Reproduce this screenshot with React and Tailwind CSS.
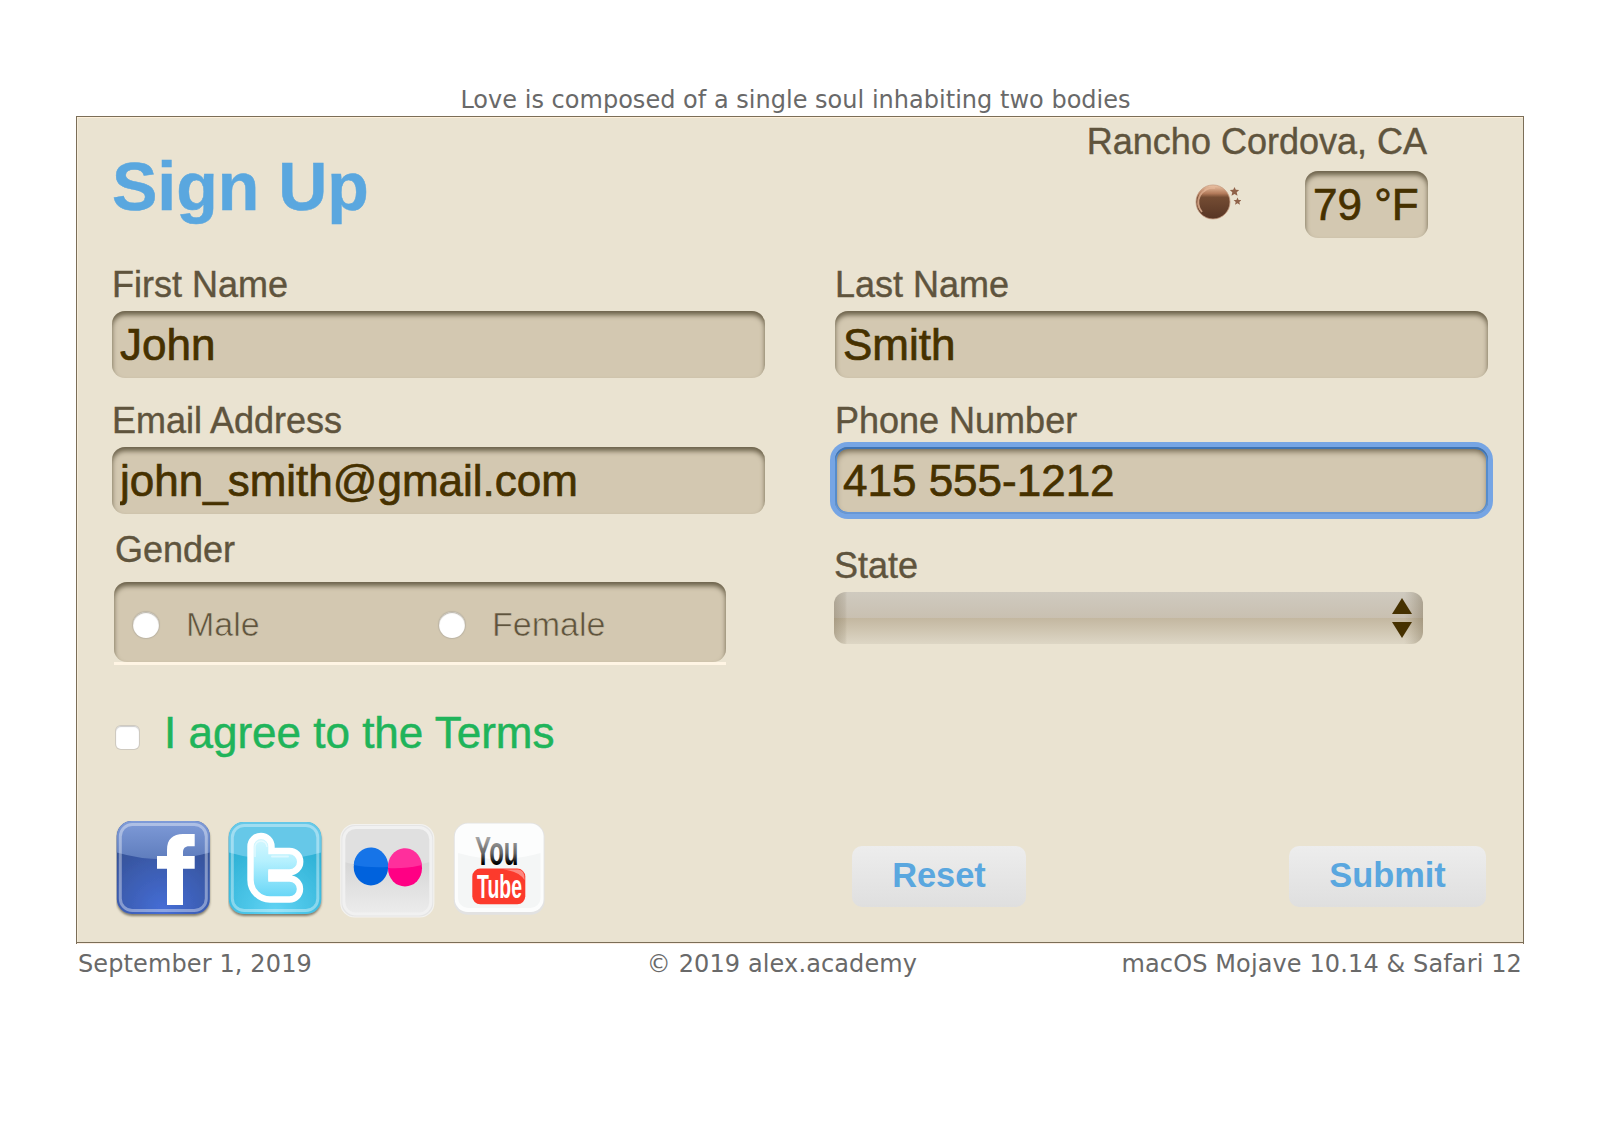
const inset = "shadow-[inset_0_4px_5px_#6b614a]";

function Field({ label, value, focused }) {
  return (
    <label className="block">
      <span className="mb-[5px] block h-[42px] text-[36px] leading-[42px] [-webkit-text-stroke:0.4px_#5f543d]">{label}</span>
      <input
        readOnly
        value={value}
        className={
          "block h-[67px] w-[653px] rounded-[13px] bg-[#d3c8b1] px-[8px] text-[44px] text-[#463100] outline-none [-webkit-text-stroke:0.7px_#463100] " +
          (focused
            ? "shadow-[0_0_0_5px_#76a5e4,inset_0_2px_0_#3e73b3,inset_0_-2px_0_#6697d6,inset_0_0_0_2px_#568ccb,inset_0_4px_6px_#665b45]"
            : inset)
        }
      />
    </label>
  );
}

function Radio({ label }) {
  return (
    <label className="flex w-[306px] items-center">
      <span className="h-[26px] w-[26px] shrink-0 rounded-full bg-white shadow-[inset_0_1px_1px_#b9b4aa,0_0_1px_1px_#bdb5a4]" />
      <span className="mb-[2px] ml-[27px] text-[34px] leading-[40px] [-webkit-text-stroke:0.6px_#d3c8b1]">{label}</span>
    </label>
  );
}

function Moon() {
  return (
    <svg width="46" height="38" viewBox="0 0 46 38">
      <defs>
        <linearGradient id="moon" x1="0" y1="0" x2="0" y2="1">
          <stop offset="0" stopColor="#efc7a8" />
          <stop offset="0.25" stopColor="#b27a5a" />
          <stop offset="0.36" stopColor="#744c33" />
          <stop offset="1" stopColor="#573524" />
        </linearGradient>
      </defs>
      <circle cx="18" cy="19" r="17" fill="url(#moon)" stroke="#c59a80" strokeWidth="0.8" />
      <path d="M7 29 A14.500 14.500 0 0 1 20 5" fill="none" stroke="#e3b799" strokeWidth="1.800" opacity="0.8" />
      <path d="M3.500 25 A16 16 0 0 1 9 7" fill="none" stroke="#c99678" strokeWidth="1.500" opacity="0.6" />
      <path d="M39.500 4 l1.300 2.800 3.400 .3 -2.500 2.200 .8 3.400 -3 -1.800 -3 1.800 .8 -3.400 -2.500 -2.200 3.400 -.3z" fill="#8f6249" />
      <path d="M42.500 14.500 l1.100 2.400 2.800 .2 -2.100 1.900 .7 2.800 -2.500 -1.500 -2.500 1.500 .7 -2.800 -2.100 -1.900 2.800 -.2z" fill="#8f6249" />
    </svg>
  );
}

function Facebook() {
  return (
    <svg width="96" height="100" viewBox="0 0 96 100">
      <defs>
        <radialGradient id="fb" cx="0.5" cy="0.95" r="0.75">
          <stop offset="0" stopColor="#456dd6" />
          <stop offset="1" stopColor="#36539a" />
        </radialGradient>
        <linearGradient id="fbGloss" x1="0" y1="0" x2="0" y2="1">
          <stop offset="0" stopColor="#7f9bd8" />
          <stop offset="1" stopColor="#5f7dbd" />
        </linearGradient>
        <filter id="drop" x="-10%" y="-10%" width="120%" height="125%">
          <feDropShadow dx="0" dy="2" stdDeviation="1.2" floodColor="#4a4436" floodOpacity="0.65" />
        </filter>
      </defs>
      <rect x="0.8" y="1" width="93" height="93" rx="15" fill="url(#fb)" filter="url(#drop)" />
      <path d="M.8 32.500 V16 A15 15 0 0 1 15.800 1 H78.800 A15 15 0 0 1 93.800 16 V32.500 Q47 46 .8 32.500z" fill="url(#fbGloss)" />
      <rect x="4.300" y="4.500" width="86" height="86" rx="12" fill="none" stroke="#fff" strokeOpacity="0.38" strokeWidth="3" />
      <path d="M51 85 V48.700 H41 V36 H51 V30 C51 19 57 14 67 14 H78.700 V26.200 H73 C69 26.200 67 28.500 67 32 V36 H78.700 V48.700 H67 V85z" fill="#fff" />
    </svg>
  );
}

function Twitter() {
  return (
    <svg width="96" height="100" viewBox="0 0 96 100">
      <defs>
        <radialGradient id="tw" cx="0.5" cy="0.97" r="0.75">
          <stop offset="0" stopColor="#60d3f4" />
          <stop offset="1" stopColor="#2fb2d6" />
        </radialGradient>
        <linearGradient id="twT" x1="0" y1="0" x2="0" y2="1">
          <stop offset="0" stopColor="#d8f8fe" />
          <stop offset="0.4" stopColor="#b4f0fe" />
          <stop offset="1" stopColor="#62d4f6" />
        </linearGradient>
      </defs>
      <rect x="0.800" y="2" width="92.500" height="92" rx="15" fill="url(#tw)" filter="url(#drop)" />
      <path d="M.8 32.500 V17 A15 15 0 0 1 15.800 2 H78.300 A15 15 0 0 1 93.300 17 V32.500 Q47 46 .8 32.500z" fill="#66c8e8" />
      <rect x="4.300" y="5.500" width="85.500" height="85" rx="12" fill="none" stroke="#fff" strokeOpacity="0.38" strokeWidth="3" />
      <path
        d="M22.500 26.400 A10.500 10.500 0 0 1 43.500 26.400 V31 H61.500 A10.700 10.700 0 0 1 61.500 52.400 H43.500 V58.500 H61.500 A10.500 10.500 0 0 1 61.500 79.500 H42 A19.500 19.500 0 0 1 22.500 60z"
        fill="url(#twT)"
        stroke="#fff"
        strokeWidth="6.400"
      />
      <path d="M40.300 55.500 H64" stroke="#fff" strokeWidth="10" />
      <path d="M27 37 V27 a6 6 0 0 1 12 0" fill="none" stroke="#fff" strokeOpacity="0.5" strokeWidth="1.500" />
      <path d="M44 36.500 H60" stroke="#fff" strokeOpacity="0.5" strokeWidth="2" strokeLinecap="round" />
    </svg>
  );
}

function Flickr() {
  return (
    <svg width="96" height="100" viewBox="0 -3 96 100">
      <defs>
        <linearGradient id="fl" x1="0" y1="0" x2="0" y2="1">
          <stop offset="0.400" stopColor="#d6d6d6" />
          <stop offset="1" stopColor="#ececec" />
        </linearGradient>
      </defs>
      <rect x="0.800" y="1.500" width="93" height="92.500" rx="14" fill="#e5e5e5" stroke="#f3f2ef" strokeWidth="1.200" />
      <rect x="4" y="4.800" width="86.500" height="86" rx="12" fill="url(#fl)" />
      <path d="M3.500 39 V16 A11 11 0 0 1 14.500 5 H79.500 A11 11 0 0 1 90.500 16 V39 Q47 50 3.500 39z" fill="#e0e0e0" />
      <rect x="3.800" y="4.500" width="87" height="86.500" rx="12" fill="none" stroke="#f1f1f1" strokeWidth="3" />
      <ellipse cx="30.900" cy="44" rx="17.200" ry="18.500" fill="#0062dd" />
      <ellipse cx="65" cy="45.200" rx="17" ry="18.300" fill="#ff0084" />
      <path d="M13.700 42 A17.200 18.500 0 0 1 48.100 44 Q28 45 13.700 42z" fill="#1674e8" />
      <path d="M48 45 A17 18.300 0 0 1 81.900 42 Q64 46 48 45z" fill="#ff2f9c" />
    </svg>
  );
}

function YouTube() {
  return (
    <svg width="94" height="100" viewBox="0 -2 94 100">
      <defs>
        <linearGradient id="you" x1="0" y1="0" x2="0" y2="1">
          <stop offset="0.200" stopColor="#a5a5a5" />
          <stop offset="0.550" stopColor="#666" />
          <stop offset="0.780" stopColor="#000" />
        </linearGradient>
      </defs>
      <rect x="0.800" y="0.800" width="90.800" height="92" rx="14" fill="#e2e2e2" />
      <rect x="1.800" y="1.600" width="88.800" height="88.500" rx="13" fill="#fcfdfd" />
      <path d="M5 31 Q47 43 87.500 31 V76 A10 10 0 0 1 77.500 86 H15 A10 10 0 0 1 5 76z" fill="#f4f6f6" />
      <text x="22" y="43" fontFamily="Liberation Sans Narrow, Liberation Sans, sans-serif" fontWeight="700" fontSize="40" textLength="43.500" lengthAdjust="spacingAndGlyphs" fill="url(#you)">You</text>
      <rect x="19.300" y="46.600" width="53" height="35.700" rx="8" fill="#fc3a2c" />
      <path d="M50 47.500 H65 Q72 48 71.500 58 Q66 49 50 47.500z" fill="#fff" opacity="0.400" />
      <text x="24" y="76" fontFamily="Liberation Sans Narrow, Liberation Sans, sans-serif" fontWeight="700" fontSize="33" textLength="45" lengthAdjust="spacingAndGlyphs" fill="#fff">Tube</text>
    </svg>
  );
}

function Button({ children, className }) {
  return (
    <button className={"h-[61px] rounded-[10px] bg-linear-to-b from-[#ededed] to-[#dfdfdf] text-[34.400px] leading-[59px] font-bold text-[#5aa7df] " + className}>
      <span className="block h-full">{children}</span>
    </button>
  );
}

export default function App() {
  return (
    <div className="h-[1124px] w-[1600px] overflow-hidden bg-white px-[76px] pt-[86px] font-['DejaVu_Sans',sans-serif] text-[24px] leading-[28px] text-[#696969]">
      <header className="flex h-[30px] justify-center pr-[9px]">
        <p className="tracking-[0.02px] whitespace-nowrap">Love is composed of a single soul inhabiting two bodies</p>
      </header>

      <main className="h-[828px] border-x border-[#7b6e58] font-['Liberation_Sans',sans-serif] text-[#5f543d]">
        <div className="flex h-[827px] gap-[70px] border-y border-[#7b6e58] bg-[#eae3d1] pl-[35px] shadow-[inset_0_1px_0_#fff0d9,inset_1px_0_0_#f6ecd9,0_1px_0_#fbeee3]">
          <section className="w-[653px] pt-[29px]">
            <h1 className="text-[68px] leading-[80px] font-bold text-[#5aa7df] [-webkit-text-stroke:0.5px_#5aa7df]">Sign Up</h1>
            <div className="mt-[38px] flex flex-col gap-[22px]">
              <Field label="First Name" value="John" />
              <Field label="Email Address" value="john_smith@gmail.com" />
            </div>
            <fieldset className="mt-[15px] ml-[2px] w-[612px] min-w-0">
              <legend className="mb-[11px] ml-[1px] h-[42px] text-[36px] leading-[42px] [-webkit-text-stroke:0.4px_#5f543d]">Gender</legend>
              <div className="border-b-[3px] border-[#fff5e4]">
                <div className={"flex h-[80px] items-center rounded-[13px] bg-[#d3c8b1] pt-[5px] pl-[19px] " + inset}>
                  <div className="w-[306px] shrink-0"><Radio label="Male" /></div>
                  <Radio label="Female" />
                </div>
              </div>
            </fieldset>
            <label className="mt-[42px] ml-[4px] flex h-[52px] text-[44px] leading-[52px] text-[#20b45a] [-webkit-text-stroke:0.5px_#20b45a]">
              <span className="mt-[19px] mr-[25px] h-[23px] w-[23px] rounded-[5px] bg-white shadow-[inset_0_1px_1px_#ccc,0_0_0_1px_#cfcac0]" />
              I agree to the Terms
            </label>
            <div className="mt-[61px] ml-[4px] flex">
              <Facebook />
              <div className="ml-4"><Twitter /></div>
              <div className="ml-4"><Flickr /></div>
              <div className="ml-[17px]"><YouTube /></div>
            </div>
          </section>

          <section className="w-[653px] pt-[4px]">
            <div className="flex w-[593px] flex-col items-end">
              <p className="pr-px text-[36px] leading-[42px] [-webkit-text-stroke:0.4px_#5f543d]">Rancho Cordova, CA</p>
              <div className="mt-[8px] flex">
                <div className="mt-[12px] mr-[64px]"><Moon /></div>
                <output className={"h-[67px] w-[123px] rounded-[13px] bg-[#d3c8b1] pl-[8px] text-[44px] leading-[67px] whitespace-nowrap text-[#463100] [-webkit-text-stroke:0.7px_#463100] " + inset}>79 °F</output>
              </div>
            </div>
            <div className="mt-[26px] flex flex-col gap-[22px]">
              <Field label="Last Name" value="Smith" />
              <Field label="Phone Number" value="415 555-1212" focused />
            </div>
            <p className="mt-[31px] -ml-px text-[36px] leading-[42px] [-webkit-text-stroke:0.4px_#5f543d]">State</p>
            <div className="mt-[5px] -ml-px flex h-[52px] w-[589px] justify-end rounded-[12px] bg-[linear-gradient(90deg,rgba(95,80,50,.28),rgba(95,80,50,.1)_11px,transparent_13px,transparent_570px,rgba(95,80,50,.08)_576px,rgba(95,80,50,.3)_589px),linear-gradient(#cfcabf,#c9c0b1_26px,#c3b7a0_26px,#ddd6c5)]">
              <svg width="20" height="40" viewBox="0 0 20 40" className="mt-[6px] mr-[11px]">
                <path d="M0 16 L10 0 L20 16z M0 24 H20 L10 40z" fill="#463100" />
              </svg>
            </div>
            <div className="mt-[202px] ml-[17px] flex w-[634px] justify-between">
              <Button className="w-[174px]">Reset</Button>
              <Button className="w-[197px]">Submit</Button>
            </div>
          </section>
        </div>
      </main>

      <footer className="mt-[6px] grid grid-cols-3 px-[2px] tracking-[0.120px] whitespace-nowrap">
        <span>September 1, 2019</span>
        <span className="pr-[36px] text-center">© 2019 alex.academy</span>
        <span className="text-right">macOS Mojave 10.14 &amp; Safari 12</span>
      </footer>
    </div>
  );
}
